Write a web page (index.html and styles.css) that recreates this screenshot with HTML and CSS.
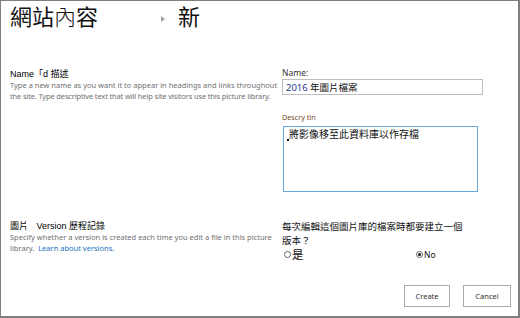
FILE: index.html
```html
<!DOCTYPE html>
<html>
<head>
<meta charset="utf-8">
<link rel="stylesheet" href="styles.css">
</head>
<body>
<div class="frame">
  <div class="header">
    <span class="crumb">網站<span class="thin">內</span>容</span>
    <span class="arrow"></span>
    <span class="crumb">新</span>
  </div>
  <div class="section s1">
    <div class="left">
      <div class="head">Name「d 描述</div>
      <div class="desc">Type a new name as you want it to appear in headings and links throughout<br><span class="tight">the site. Type descriptive text that will help site visitors use this picture library.</span></div>
    </div>
    <div class="right">
      <div class="label">Name:</div>
      <div class="input"><span class="num">2016</span> 年圖片檔案</div>
      <div class="label small">Descry tin</div>
      <div class="textarea"><span class="caret"></span>將影像移至此資料庫以作存檔</div>
    </div>
  </div>
  <div class="section s2">
    <div class="left">
      <div class="head">圖片 <span class="gap"></span>Version 歷程記錄</div>
      <div class="desc">Specify whether a version is created each time you edit a file in this picture<br>library. &nbsp;<a class="link">Learn about versions.</a></div>
    </div>
    <div class="right">
      <div class="question">每次編輯這個圖片庫的檔案時都要建立一個<br>版本？</div>
      <div class="radios">
        <span class="opt yes"><span class="radio"></span>是</span>
        <span class="opt no"><span class="radio on"></span>No</span>
      </div>
    </div>
  </div>
  <div class="buttons">
    <span class="btn create">Create</span>
    <span class="btn cancel">Cancel</span>
  </div>
</div>
</body>
</html>
```
FILE: styles.css
```css
html, body { margin: 0; padding: 0; background: #fff; }
body { font-family: "Noto Sans", "Noto Sans CJK TC", sans-serif; color: #222; }
.frame {
  width: 520px; height: 318px; box-sizing: border-box;
  border-top: 1px solid #7f7f7f; border-left: 1px solid #7f7f7f;
  border-right: 2px solid #7f7f7f; border-bottom: 2px solid #7f7f7f;
  overflow: hidden;
}
.header { display: flex; align-items: flex-start; padding: 0 0 0 9px; height: 32px; }
.crumb { font-family: "Noto Sans CJK TC", sans-serif; font-size: 22px; line-height: 28px; color: #111; }
.thin { font-weight: 300; }
.arrow {
  width: 0; height: 0; margin: 15px 13px 0 63px;
  border-left: 4px solid #a0a0a0; border-top: 3px solid transparent; border-bottom: 3px solid transparent;
}
.section { display: flex; }
.s1 { margin-top: 35px; height: 152px; }
.s2 { height: 62px; }
.left { width: 272px; padding-left: 9px; }
.right { flex: 1; }
.head { font-family: "Liberation Sans", "Noto Sans CJK TC", sans-serif; font-size: 9px; line-height: 12px; color: #000; }
.gap { display: inline-block; width: 6px; }
.desc { font-size: 7.5px; line-height: 10.5px; color: #707070; white-space: nowrap; }
.tight { letter-spacing: -0.15px; }
.link { color: #1a6fc0; }
.label { font-size: 8.5px; line-height: 10px; color: #333; }
.label.small { font-size: 7.2px; color: #7a4a2a; margin-top: 17px; line-height: 10px; }
.input {
  margin-top: 1px; width: 201px; height: 16px; box-sizing: border-box;
  border: 1px solid #bdbdbd; padding-left: 3px;
  font-family: "Noto Sans CJK TC", sans-serif; font-size: 9.5px; line-height: 14px; color: #111;
}
.num { font-family: "Noto Sans", sans-serif; color: #1d3b8a; }
.textarea {
  margin-top: 4px; margin-left: 1px; width: 195px; height: 66px; box-sizing: border-box;
  border: 1px solid #6aa8dc; padding: 0 0 0 5px;
  font-family: "Noto Sans CJK TC", sans-serif; font-size: 10px; line-height: 14px; color: #111;
  position: relative;
}
.caret { position: absolute; left: 3px; top: 12px; width: 2px; height: 2px; background: #111; }
.question { font-family: "Noto Sans CJK TC", sans-serif; font-size: 9.5px; line-height: 14px; color: #111; margin-top: -1px; }
.radios { display: flex; align-items: center; height: 13px; margin-top: 1px; }
.opt { display: inline-flex; align-items: center; font-family: "Noto Sans CJK TC", sans-serif; color: #111; }
.yes { font-size: 11.5px; line-height: 13px; width: 132px; padding-left: 2px; }
.no { font-size: 8.5px; font-family: "Noto Sans", sans-serif; }
.radio {
  width: 7px; height: 7px; border: 1px solid #666; border-radius: 50%; box-sizing: border-box; margin-right: 1px;
  position: relative;
}
.radio.on::after {
  content: ""; position: absolute; left: 1px; top: 1px; width: 3px; height: 3px; border-radius: 50%; background: #111;
}
.buttons { display: flex; justify-content: flex-end; gap: 13px; padding-right: 7px; margin-top: 3px; }
.btn {
  display: inline-flex; align-items: center; justify-content: center; box-sizing: border-box;
  height: 22px; border: 1px solid #ababab; font-size: 7.5px; color: #333; background: #fff;
}
.create { width: 46px; }
.cancel { width: 48px; }
```
